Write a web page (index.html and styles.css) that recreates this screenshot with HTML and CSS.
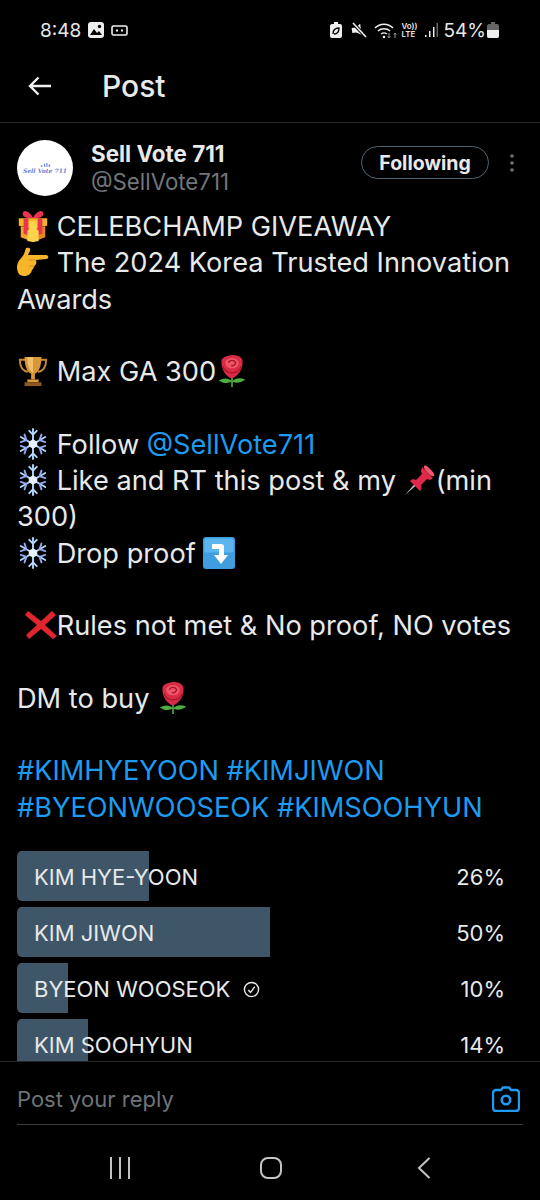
FILE: index.html
```html
<!DOCTYPE html>
<html>
<head>
<title>Post</title>
<meta charset="UTF-8">
<link rel="stylesheet" href="styles.css">
</head>
<body>
<svg class="defs" width="0" height="0">
  <defs>
    <symbol id="e-gift" viewBox="0 0 32 34">
      <path d="M16 8C12 0 5-1 5 4c0 4 6 5 11 5zM16 8c4-8 11-9 11-4 0 4-6 5-11 5z" fill="#e8344e"/>
      <rect x="1" y="9" width="30" height="8" fill="#f09a26"/>
      <path d="M3 17l13 4v13L3 29z" fill="#f2a52a"/>
      <path d="M29 17l-13 4v13l13-5z" fill="#e8851a"/>
      <path d="M1 9h30v7l-15 5-15-5z" fill="#f6b32a"/>
      <path d="M6 9h5v18l-5-2zM21 9h5v16l-5 2z" fill="#e8344e"/>
      <path d="M12 12h8v9l2 1v11l-6 1-6-1V22l2-1z" fill="#fcd34e"/>
    </symbol>
    <symbol id="e-point" viewBox="0 0 32 30">
      <path d="M9 1c3-1 5 0 4 3l-2 4 18 0c3 0 3 4 0 4l-10 1c1 3 0 5-2 6 0 2-1 3-2 4-1 4-4 6-8 6-5 0-7-4-7-9 0-6 5-9 7-13z" fill="#f7b52c"/>
      <path d="M12 13h7M12 19l6 0" stroke="#d98a10" stroke-width="1.2" fill="none"/>
    </symbol>
    <symbol id="e-trophy" viewBox="0 0 32 34">
      <path d="M8 5H2c0 8 3 12 9 13M24 5h6c0 8-3 12-9 13" fill="none" stroke="#c98a30" stroke-width="2"/>
      <path d="M7 2h18c0 10-3 16-7 18v6h-4v-6C10 18 7 12 7 2z" fill="#d9973a"/>
      <path d="M10 2h6v17c-4-3-6-9-6-17z" fill="#f0c069"/>
      <rect x="10" y="26" width="12" height="3" fill="#d9973a"/>
      <rect x="7" y="29" width="18" height="4" fill="#8c5a20"/>
    </symbol>
    <symbol id="e-rose" viewBox="0 0 30 34">
      <path d="M15 22v12" stroke="#3f9a3a" stroke-width="2"/>
      <path d="M15 28C10 23 5 25 1 27c4 3 10 4 14 1zM15 28c4-4 9-4 14-2-3 3-10 5-14 2z" fill="#4caf3f"/>
      <path d="M4 5c3-4 7-4 11-5 5 0 9 1 11 5 1 7-1 15-11 20C6 22 3 12 4 5z" fill="#d92b45"/>
      <path d="M8 7c3-5 11-5 14 0 1 4-3 8-7 7-4 1-8-3-7-7z" fill="#ee5566"/>
      <path d="M11 8c2-3 6-3 8 0-1 3-3 4-5 3" fill="none" stroke="#a81428" stroke-width="1.4"/>
      <path d="M5 12c3 6 6 7 10 7 4 0 8-2 10-7" fill="none" stroke="#a81428" stroke-width="1.2"/>
    </symbol>
    <symbol id="e-snow" viewBox="0 0 32 34">
      <g stroke="#b5d8ff" stroke-width="2" fill="none" stroke-linecap="round">
        <path d="M16 1v32M3 9.500l26 15M29 9.500L3 24.500"/>
        <path d="M12 3l4 4 4-4M12 31l4-4 4 4"/>
        <path d="M3 15l6-2-2-6M29 15l-6-2 2-6M3 19l6 2-2 6M29 19l-6 2 2 6" stroke="#92a8f0"/>
      </g>
      <path d="M16 12l4.500 2.500v5L16 22l-4.500-2.500v-5z" fill="#e6f1ff"/>
    </symbol>
    <symbol id="e-pin" viewBox="0 0 32 32">
      <path d="M1 31l13-15 2 2z" fill="#b9c4cc"/>
      <path d="M18 3l11 11-3 2-3-1-6 6c1 3 0 5-1 6L6 17c2-2 4-2 6-1l6-6-1-3z" fill="#e0294a"/>
      <path d="M20 2c2-1 3 0 5 2l3 3c2 2 3 4 2 5-2 1-4-1-6-3s-5-5-4-7z" fill="#f2566e"/>
    </symbol>
    <symbol id="e-down" viewBox="0 0 32 32">
      <rect width="32" height="32" rx="3" fill="#3f9ee0"/>
      <rect x="1.500" y="1.500" width="29" height="14" rx="2" fill="#5cb5ee"/>
      <path d="M9 7h9c2 0 3 1 3 3v8h4l-7 9-7-9h5v-6H9z" fill="#fff"/>
    </symbol>
    <symbol id="e-cross" viewBox="0 0 32 28">
      <path d="M3 0l13 10L27 0l4 4-11 10 12 11-4 3-12-10L4 28l-3-4 11-10L0 4z" fill="#e0252e"/>
    </symbol>
  </defs>
</svg>

<div class="phone">
  <div class="status">
    <div class="status-left">
      <span class="clock">8:48</span>
      <svg class="st-pic" viewBox="0 0 16 16"><rect width="16" height="16" rx="3" fill="#eee"/><circle cx="11.500" cy="4.500" r="1.700" fill="#000"/><path d="M2 13l4-6 3 4 2-2 3 4z" fill="#000"/></svg>
      <svg class="st-card" viewBox="0 0 17 11"><rect x="1" y="1" width="15" height="9" rx="1.500" fill="none" stroke="#eee" stroke-width="1.600"/><path d="M5 5.500h2M10 5.500h2" stroke="#eee" stroke-width="2"/></svg>
    </div>
    <div class="status-right">
      <svg class="st-leaf" viewBox="0 0 12 16"><path d="M4 0h4v2h2a2 2 0 0 1 2 2v10a2 2 0 0 1-2 2H2a2 2 0 0 1-2-2V4a2 2 0 0 1 2-2h2z" fill="#eee"/><path d="M3 12c0-4 2-6 6-6 0 4-2 6-5 6" fill="none" stroke="#000" stroke-width="1.300"/></svg>
      <svg class="st-mute" viewBox="0 0 16 16"><path d="M1 5h4l5-3v11l-5-3H1z" fill="#eee" transform="rotate(-8 8 8)"/><path d="M2 1l13 14" stroke="#000" stroke-width="3.400"/><path d="M2 1l13 14" stroke="#eee" stroke-width="1.600"/></svg>
      <svg class="st-wifi" viewBox="0 0 23 17"><g fill="none" stroke="#eee" stroke-width="1.400"><path d="M1 6c5-5 13-5 18 0"/><path d="M4 9c3-3 9-3 12 0"/><path d="M7 12c2-1.500 4-1.500 6 0"/></g><circle cx="10" cy="15" r="1.300" fill="#eee"/><path d="M15 11v5M21 16v-5M13.800 14.500l1.200 1.500 1.200-1.500M19.800 12.500l1.200-1.500 1.200 1.500" fill="none" stroke="#999" stroke-width="1"/></svg>
      <div class="st-lte"><span>Vo))</span><span>LTE</span></div>
      <svg class="st-bars" viewBox="0 0 14 14"><path d="M1 12h1.500v2H1zM5 8h1.500v6H5zM9 4h1.500v10H9z" fill="#eee"/><path d="M12.500 0H14v14h-1.500z" fill="#666"/></svg>
      <span class="battery-num">54%</span>
      <svg class="st-batt" viewBox="0 0 12 16"><path d="M4 0h4v2h2a2 2 0 0 1 2 2v10a2 2 0 0 1-2 2H2a2 2 0 0 1-2-2V4a2 2 0 0 1 2-2h2z" fill="#666"/><path d="M0 8h12v6a2 2 0 0 1-2 2H2a2 2 0 0 1-2-2z" fill="#eee"/></svg>
    </div>
  </div>

  <div class="topbar">
    <svg class="back" viewBox="0 0 24 20"><path d="M23 10H2M10.500 1.500L2 10l8.500 8.500" fill="none" stroke="#f0f0f0" stroke-width="2.400"/></svg>
    <span class="title">Post</span>
  </div>

  <div class="content">
    <div class="author">
      <div class="avatar">
        <svg class="avatar-mark" viewBox="0 0 14 6"><path d="M1 6V4h2v2zM5 6V2h1.500v4zM8 6V1h1.500v5zM11 6V3h2v3z" fill="#6f7fd0"/></svg>
        <span class="avatar-text">Sell Vote 711</span>
      </div>
      <div class="names">
        <span class="name">Sell Vote 711</span>
        <span class="handle">@SellVote711</span>
      </div>
      <div class="follow-btn">Following</div>
      <svg class="kebab" viewBox="0 0 4 18"><circle cx="2" cy="2" r="1.800"/><circle cx="2" cy="9" r="1.800"/><circle cx="2" cy="16" r="1.800"/></svg>
    </div>

    <div class="body-text">
      <svg class="emoji"><use href="#e-gift"/></svg> CELEBCHAMP GIVEAWAY<br>
      <svg class="emoji"><use href="#e-point"/></svg> The 2024 Korea Trusted Innovation<br>
      Awards<br>
      <br>
      <svg class="emoji"><use href="#e-trophy"/></svg> Max GA 300<svg class="emoji"><use href="#e-rose"/></svg><br>
      <br>
      <svg class="emoji"><use href="#e-snow"/></svg> Follow <span class="link">@SellVote711</span><br>
      <svg class="emoji"><use href="#e-snow"/></svg> Like and RT this post &amp; my <svg class="emoji"><use href="#e-pin"/></svg>(min<br>
      300)<br>
      <svg class="emoji"><use href="#e-snow"/></svg> Drop proof <svg class="emoji"><use href="#e-down"/></svg><br>
      <br>
      &nbsp;<svg class="emoji"><use href="#e-cross"/></svg>Rules not met &amp; No proof, NO votes<br>
      <br>
      DM to buy <svg class="emoji"><use href="#e-rose"/></svg><br>
      <br>
      <span class="link">#KIMHYEYOON #KIMJIWON<br>
      #BYEONWOOSEOK #KIMSOOHYUN</span>
    </div>

    <div class="poll">
      <div class="poll-row">
        <div class="poll-track">
          <div class="poll-fill" style="width:26%"></div>
          <span class="poll-label">KIM HYE-YOON</span>
        </div>
        <span class="poll-pct">26%</span>
      </div>
      <div class="poll-row">
        <div class="poll-track">
          <div class="poll-fill" style="width:50%"></div>
          <span class="poll-label">KIM JIWON</span>
        </div>
        <span class="poll-pct">50%</span>
      </div>
      <div class="poll-row">
        <div class="poll-track">
          <div class="poll-fill" style="width:10%"></div>
          <span class="poll-label">BYEON WOOSEOK</span>
          <svg class="check" viewBox="0 0 18 18"><circle cx="9" cy="9" r="7.500" fill="none" stroke="#e8e8e8" stroke-width="1.500"/><path d="M5.500 9.500l2.500 2.500 4.500-6" fill="none" stroke="#e8e8e8" stroke-width="1.500"/></svg>
        </div>
        <span class="poll-pct">10%</span>
      </div>
      <div class="poll-row">
        <div class="poll-track">
          <div class="poll-fill" style="width:14%"></div>
          <span class="poll-label">KIM SOOHYUN</span>
        </div>
        <span class="poll-pct">14%</span>
      </div>
    </div>
  </div>

  <div class="reply">
    <div class="reply-inner">
      <span class="reply-hint">Post your reply</span>
      <svg class="camera" viewBox="0 0 28 26"><path d="M9 4l2-2.500h6L19 4h5a3 3 0 0 1 3 3v15a3 3 0 0 1-3 3H4a3 3 0 0 1-3-3V7a3 3 0 0 1 3-3z" fill="none" stroke="#1d9bf0" stroke-width="2.400"/><circle cx="14" cy="14" r="4.200" fill="none" stroke="#1d9bf0" stroke-width="2.600"/></svg>
    </div>
  </div>

  <div class="navbar">
    <svg class="nav-menu" viewBox="0 0 22 22"><path d="M2 0v22M11 0v22M20 0v22" stroke="#c4c4c4" stroke-width="2"/></svg>
    <svg class="nav-home" viewBox="0 0 22 22"><rect x="1" y="1" width="20" height="20" rx="7" fill="none" stroke="#c4c4c4" stroke-width="2"/></svg>
    <svg class="nav-back" viewBox="0 0 14 22"><path d="M12.500 1L2 11l10.500 10" fill="none" stroke="#c4c4c4" stroke-width="2"/></svg>
  </div>
</div>
</body>
</html>
```

FILE: styles.css
```css
* {
    box-sizing: border-box;
}
html, body {
    margin: 0;
    background: #000;
}
body {
    font-family: "Inter", "Liberation Sans", sans-serif;
    color: #e7e9ea;
}
.defs {
    display: block;
    height: 0;
}
.phone {
    width: 540px;
    height: 1200px;
    display: flex;
    flex-direction: column;
    overflow: hidden;
    background: #000;
}

/* status bar */
.status {
    height: 60px;
    flex: none;
    padding: 0 41px 0 40px;
    display: flex;
    align-items: center;
    justify-content: space-between;
    color: #e8e8e8;
}
.status-left, .status-right {
    display: flex;
    align-items: center;
}
.clock {
    font-size: 19px;
    margin-right: 7px;
}
.st-pic {
    width: 16px;
    height: 16px;
    margin-right: 7px;
}
.st-card {
    width: 17px;
    height: 11px;
}
.st-leaf {
    width: 12px;
    height: 16px;
    margin-right: 9px;
}
.st-mute {
    width: 16px;
    height: 16px;
    margin-right: 7px;
}
.st-wifi {
    width: 23px;
    height: 17px;
    margin-right: 4px;
}
.st-lte {
    display: flex;
    flex-direction: column;
    font-size: 8px;
    line-height: 8px;
    font-weight: 600;
    margin-right: 6px;
}
.st-bars {
    width: 14px;
    height: 14px;
    margin-right: 6px;
}
.battery-num {
    font-size: 19px;
    margin-right: 1px;
}
.st-batt {
    width: 12px;
    height: 16px;
}

/* header */
.topbar {
    height: 63px;
    flex: none;
    display: flex;
    align-items: center;
    padding: 0 0 11px 28px;
    border-bottom: 1px solid #25282b;
}
.back {
    width: 24px;
    height: 20px;
    margin-right: 50px;
}
.title {
    font-size: 30px;
    font-weight: 500;
    color: #e7e9ea;
}

/* post */
.content {
    flex: 1;
    min-height: 0;
    overflow: hidden;
    padding: 17px 17px 0;
}
.author {
    display: flex;
    align-items: flex-start;
    height: 56px;
}
.avatar {
    width: 56px;
    height: 56px;
    flex: none;
    border-radius: 50%;
    background: #fff;
    display: flex;
    flex-direction: column;
    align-items: center;
    justify-content: center;
    margin-right: 18px;
}
.avatar-mark {
    width: 11px;
    height: 5px;
}
.avatar-text {
    font-family: "DejaVu Serif", serif;
    font-style: italic;
    font-size: 6px;
    line-height: 8px;
    font-weight: bold;
    color: #6f7fd0;
    white-space: nowrap;
}
.names {
    display: flex;
    flex-direction: column;
    flex: 1;
}
.name {
    font-size: 22.4px;
    line-height: 28px;
    font-weight: 700;
}
.handle {
    font-size: 22.3px;
    line-height: 28px;
    color: #71767b;
}
.follow-btn {
    width: 128px;
    height: 33px;
    border: 1px solid #536471;
    border-radius: 17px;
    font-size: 19.5px;
    font-weight: 700;
    display: flex;
    align-items: center;
    justify-content: center;
    margin-top: 6px;
    margin-right: 21px;
}
.kebab {
    width: 4px;
    height: 18px;
    fill: #71767b;
    margin-right: 9px;
    margin-top: 14px;
}
.body-text {
    margin-top: 13px;
    font-size: 27.2px;
    line-height: 36.3px;
    white-space: nowrap;
}
.link {
    color: #1d9bf0;
}
.emoji {
    width: 32px;
    height: 32px;
    vertical-align: -6px;
}

/* poll */
.poll {
    margin-top: 25px;
    display: flex;
    flex-direction: column;
    gap: 6px;
}
.poll-row {
    display: flex;
    align-items: center;
    justify-content: space-between;
    position: relative;
    height: 50px;
    padding: 2px 18px 0 0;
    font-size: 22px;
}
.poll-track {
    display: flex;
    align-items: center;
    padding-left: 17px;
}
.poll-fill {
    position: absolute;
    left: 0;
    top: 0;
    bottom: 0;
    background: #3e5668;
    border-radius: 5px 0 0 5px;
}
.poll-label, .poll-pct, .check {
    position: relative;
}
.check {
    width: 17px;
    height: 17px;
    margin-left: 13px;
}

/* reply box */
.reply {
    height: 64px;
    flex: none;
    border-top: 1px solid #25282b;
    padding: 0 17px;
}
.reply-inner {
    height: 63px;
    display: flex;
    align-items: center;
    justify-content: space-between;
    border-bottom: 1px solid #3a3d40;
    padding: 12px 3px 0 0;
}
.reply-hint {
    font-size: 22px;
    color: #6e7479;
}
.camera {
    width: 28px;
    height: 26px;
}

/* android nav */
.navbar {
    height: 75px;
    flex: none;
    display: flex;
    align-items: center;
    padding: 11px 0 0 109px;
}
.nav-menu {
    width: 22px;
    height: 22px;
    margin-right: 129px;
}
.nav-home {
    width: 22px;
    height: 22px;
    margin-right: 135px;
}
.nav-back {
    width: 14px;
    height: 22px;
}
```
